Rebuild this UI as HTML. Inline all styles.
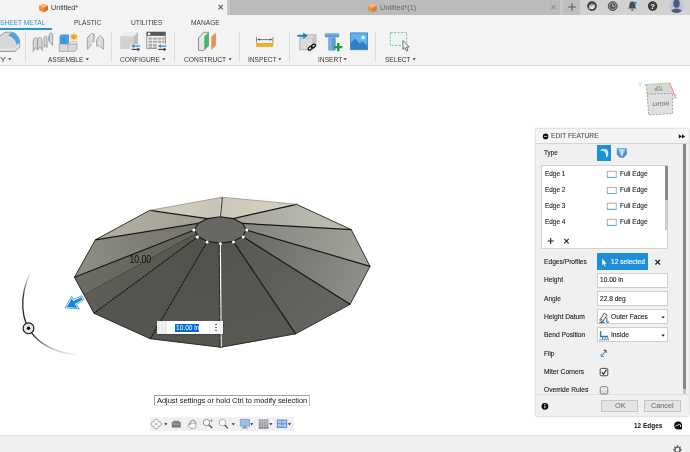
<!DOCTYPE html>
<html>
<head>
<meta charset="utf-8">
<title>Untitled*</title>
<style>
html,body{margin:0;padding:0;}
body{width:690px;height:452px;overflow:hidden;background:#fff;font-family:"Liberation Sans",sans-serif;font-size:7.3px;color:#333;}
#root{position:relative;width:690px;height:452px;overflow:hidden;will-change:transform;}
.abs{position:absolute;}
.t{position:absolute;white-space:nowrap;line-height:10px;height:10px;transform-origin:0 50%;}
/* top tab bar */
#tabbar{left:0;top:0;width:690px;height:15px;background:#d1d1d1;border-bottom:1px solid #e0e0e0;}
#tab1{left:0;top:0;width:227px;height:16px;background:#f3f3f3;}
#tab2{left:227px;top:0;width:333px;height:15px;background:#bbb;border-left:3px solid #c8c8c8;box-sizing:border-box;}
#plus{left:560px;top:0;width:20.2px;height:15px;background:#bebebe;border-left:3px solid #c9c9c9;box-sizing:border-box;}
/* ribbon */
#ribbon{left:0;top:15px;width:690px;height:50px;background:#f3f3f3;border-bottom:1px solid #d9d9d9;}
.rt{top:17.7px;font-size:7.4px;color:#3a3a3a;}
.lbl{top:54.8px;font-size:7.4px;color:#383838;}
.div{position:absolute;top:32px;width:1px;height:30px;background:#dcdcdc;}
/* panel */
#panel{left:536px;top:128.5px;width:153px;height:287px;background:#f0f0f0;box-shadow:0 0 2px rgba(0,0,0,.35);}
#phead{left:0;top:0;width:153px;height:14px;background:#f5f5f5;border-bottom:1px solid #d4d4d4;}
#panel .t{margin-top:0.6px;-webkit-text-stroke:0.12px;}
.pl{left:7.8px;font-size:7.3px;color:#222;}
.inp{position:absolute;left:60.8px;width:71.2px;height:15.4px;background:#fff;border:1px solid #cfcfcf;box-sizing:border-box;}
.btn{position:absolute;top:271.6px;height:11.8px;box-sizing:border-box;border:1px solid #c4c4c4;background:#e4e4e4;color:#555;font-size:8px;text-align:center;line-height:10px;}
/* bottom */
#status{left:0;top:435px;width:690px;height:17px;background:#f0f0f0;border-top:1px solid #e2e2e2;box-sizing:border-box;}
</style>
</head>
<body>
<div id="root">

<!-- ======= canvas graphics (3D model etc.) ======= -->
<svg class="abs" id="scene" style="left:0;top:66px" width="690" height="369" viewBox="0 66 690 369">
<!--MODEL-->
<defs><linearGradient id="g0" gradientUnits="userSpaceOnUse" x1="259.4" y1="200.8" x2="226.8" y2="217.7"><stop offset="0" stop-color="#d2cec0"/><stop offset="1" stop-color="#cbc7b9"/></linearGradient><linearGradient id="g1" gradientUnits="userSpaceOnUse" x1="323.9" y1="217.0" x2="237.9" y2="221.0"><stop offset="0" stop-color="#bbbaaf"/><stop offset="1" stop-color="#a7a79e"/></linearGradient><linearGradient id="g2" gradientUnits="userSpaceOnUse" x1="360.6" y1="248.0" x2="244.4" y2="226.7"><stop offset="0" stop-color="#a1a19a"/><stop offset="1" stop-color="#84847f"/></linearGradient><linearGradient id="g3" gradientUnits="userSpaceOnUse" x1="360.1" y1="285.3" x2="244.4" y2="233.3"><stop offset="0" stop-color="#8e8e88"/><stop offset="1" stop-color="#696863"/></linearGradient><linearGradient id="g4" gradientUnits="userSpaceOnUse" x1="322.9" y1="319.1" x2="237.9" y2="239.0"><stop offset="0" stop-color="#65645f"/><stop offset="1" stop-color="#595853"/></linearGradient><linearGradient id="g5" gradientUnits="userSpaceOnUse" x1="258.2" y1="340.5" x2="226.8" y2="242.3"><stop offset="0" stop-color="#595853"/><stop offset="1" stop-color="#55544f"/></linearGradient><linearGradient id="g6" gradientUnits="userSpaceOnUse" x1="185.6" y1="342.9" x2="213.9" y2="242.3"><stop offset="0" stop-color="#56554f"/><stop offset="1" stop-color="#52514b"/></linearGradient><linearGradient id="g7" gradientUnits="userSpaceOnUse" x1="122.2" y1="325.9" x2="202.7" y2="239.0"><stop offset="0" stop-color="#56554f"/><stop offset="1" stop-color="#53524c"/></linearGradient><linearGradient id="g8" gradientUnits="userSpaceOnUse" x1="84.2" y1="295.2" x2="196.2" y2="233.3"><stop offset="0" stop-color="#5e5d57"/><stop offset="1" stop-color="#585750"/></linearGradient><linearGradient id="g8b" gradientUnits="userSpaceOnUse" x1="84.2" y1="295.2" x2="196.2" y2="233.3"><stop offset="0" stop-color="#6c6b64"/><stop offset="1" stop-color="#64635c"/></linearGradient><linearGradient id="g9" gradientUnits="userSpaceOnUse" x1="85.0" y1="258.5" x2="196.2" y2="226.7"><stop offset="0" stop-color="#8c8c83"/><stop offset="1" stop-color="#74736b"/></linearGradient><linearGradient id="g10" gradientUnits="userSpaceOnUse" x1="122.5" y1="225.1" x2="202.7" y2="221.0"><stop offset="0" stop-color="#afad9f"/><stop offset="1" stop-color="#a2a093"/></linearGradient><linearGradient id="g11" gradientUnits="userSpaceOnUse" x1="185.9" y1="203.9" x2="213.9" y2="217.7"><stop offset="0" stop-color="#d0ccbd"/><stop offset="1" stop-color="#c8c4b5"/></linearGradient></defs>
<polygon points="222.2,197.3 296.5,204.3 233.2,218.6 220.3,216.8" fill="url(#g0)" stroke="url(#g0)" stroke-width="0.6"/>
<polygon points="296.5,204.3 351.3,229.7 242.6,223.4 233.2,218.6" fill="url(#g1)" stroke="url(#g1)" stroke-width="0.6"/>
<polygon points="351.3,229.7 370.0,266.3 246.1,230.0 242.6,223.4" fill="url(#g2)" stroke="url(#g2)" stroke-width="0.6"/>
<polygon points="370.0,266.3 350.1,304.3 242.6,236.6 246.1,230.0" fill="url(#g3)" stroke="url(#g3)" stroke-width="0.6"/>
<polygon points="350.1,304.3 295.6,333.8 233.2,241.4 242.6,236.6" fill="url(#g4)" stroke="url(#g4)" stroke-width="0.6"/>
<polygon points="295.6,333.8 220.8,347.2 220.3,243.2 233.2,241.4" fill="url(#g5)" stroke="url(#g5)" stroke-width="0.6"/>
<polygon points="220.8,347.2 150.3,338.7 207.4,241.4 220.3,243.2" fill="url(#g6)" stroke="url(#g6)" stroke-width="0.6"/>
<polygon points="150.3,338.7 94.0,313.2 198.0,236.6 207.4,241.4" fill="url(#g7)" stroke="url(#g7)" stroke-width="0.6"/>
<polygon points="94.0,313.2 74.5,277.2 194.5,230.0 198.0,236.6" fill="url(#g8)" stroke="url(#g8)" stroke-width="0.6"/>
<polygon points="84.2,295.2 74.5,277.2 194.5,230.0 196.2,233.3" fill="url(#g8b)"/>
<polygon points="74.5,277.2 95.4,239.8 198.0,223.4 194.5,230.0" fill="url(#g9)" stroke="url(#g9)" stroke-width="0.6"/>
<polygon points="95.4,239.8 149.7,210.4 207.4,218.6 198.0,223.4" fill="url(#g10)" stroke="url(#g10)" stroke-width="0.6"/>
<polygon points="149.7,210.4 222.2,197.3 220.3,216.8 207.4,218.6" fill="url(#g11)" stroke="url(#g11)" stroke-width="0.6"/>
<polygon points="220.3,216.8 233.2,218.6 242.6,223.4 246.1,230.0 242.6,236.6 233.2,241.4 220.3,243.2 207.4,241.4 198.0,236.6 194.5,230.0 198.0,223.4 207.4,218.6" fill="#686762" stroke="#181816" stroke-width="1.1"/>
<line x1="220.3" y1="216.8" x2="222.2" y2="197.3" stroke="#181816" stroke-width="1.2"/>
<line x1="233.2" y1="218.6" x2="296.5" y2="204.3" stroke="#181816" stroke-width="1.2"/>
<line x1="242.6" y1="223.4" x2="351.3" y2="229.7" stroke="#181816" stroke-width="1.2"/>
<line x1="246.1" y1="230.0" x2="370.0" y2="266.3" stroke="#181816" stroke-width="1.2"/>
<line x1="242.6" y1="236.6" x2="350.1" y2="304.3" stroke="#181816" stroke-width="1.2"/>
<line x1="233.2" y1="241.4" x2="295.6" y2="333.8" stroke="#181816" stroke-width="1.2"/>
<line x1="220.3" y1="243.2" x2="220.8" y2="347.2" stroke="#181816" stroke-width="1.2"/>
<line x1="207.4" y1="241.4" x2="150.3" y2="338.7" stroke="#181816" stroke-width="1.2" stroke-dasharray="2.2 0.7"/>
<line x1="198.0" y1="236.6" x2="94.0" y2="313.2" stroke="#181816" stroke-width="1.2" stroke-dasharray="2.2 0.7"/>
<line x1="194.5" y1="230.0" x2="74.5" y2="277.2" stroke="#181816" stroke-width="1.2"/>
<line x1="198.0" y1="223.4" x2="95.4" y2="239.8" stroke="#181816" stroke-width="1.2"/>
<line x1="207.4" y1="218.6" x2="149.7" y2="210.4" stroke="#181816" stroke-width="1.2"/>
<line x1="222.2" y1="197.3" x2="296.5" y2="204.3" stroke="#8f8e84" stroke-width="0.7" stroke-linecap="round"/>
<line x1="296.5" y1="204.3" x2="351.3" y2="229.7" stroke="#222220" stroke-width="0.85" stroke-linecap="round"/>
<line x1="351.3" y1="229.7" x2="370.0" y2="266.3" stroke="#222220" stroke-width="0.85" stroke-linecap="round"/>
<line x1="370.0" y1="266.3" x2="350.1" y2="304.3" stroke="#222220" stroke-width="0.85" stroke-linecap="round"/>
<line x1="350.1" y1="304.3" x2="295.6" y2="333.8" stroke="#222220" stroke-width="0.85" stroke-linecap="round"/>
<line x1="295.6" y1="333.8" x2="220.8" y2="347.2" stroke="#222220" stroke-width="0.85" stroke-linecap="round"/>
<line x1="220.8" y1="347.2" x2="150.3" y2="338.7" stroke="#222220" stroke-width="0.85" stroke-linecap="round"/>
<line x1="150.3" y1="338.7" x2="94.0" y2="313.2" stroke="#222220" stroke-width="0.85" stroke-linecap="round"/>
<line x1="94.0" y1="313.2" x2="74.5" y2="277.2" stroke="#222220" stroke-width="0.85" stroke-linecap="round"/>
<line x1="74.5" y1="277.2" x2="95.4" y2="239.8" stroke="#222220" stroke-width="0.85" stroke-linecap="round"/>
<line x1="95.4" y1="239.8" x2="149.7" y2="210.4" stroke="#222220" stroke-width="0.85" stroke-linecap="round"/>
<line x1="149.7" y1="210.4" x2="222.2" y2="197.3" stroke="#8f8e84" stroke-width="0.7" stroke-linecap="round"/>
<circle cx="246.7" cy="230.0" r="1.5" fill="#fff"/>
<circle cx="243.2" cy="236.9" r="1.5" fill="#fff"/>
<circle cx="233.5" cy="242.0" r="1.5" fill="#fff"/>
<circle cx="220.3" cy="243.8" r="1.5" fill="#fff"/>
<circle cx="207.1" cy="242.0" r="1.5" fill="#fff"/>
<circle cx="197.4" cy="236.9" r="1.5" fill="#fff"/>
<circle cx="193.9" cy="230.0" r="1.5" fill="#fff"/>
<!--/MODEL-->

<!-- thin construction line on face 8 -->
<line x1="84.3" y1="294.6" x2="196.2" y2="233.6" stroke="#2a2a28" stroke-width="0.5"/>
<!-- selected (white) edge -->
<line x1="221.4" y1="198.6" x2="219.7" y2="216.6" stroke="#fff" stroke-width="0.7" opacity="0.85"/>
<line x1="220.3" y1="244" x2="221.2" y2="346.8" stroke="#fff" stroke-width="1.2"/>
<line x1="219.2" y1="244" x2="219.9" y2="346.8" stroke="#222" stroke-width="0.8" stroke-dasharray="9 1.5"/>
<!-- dimension label -->
<text x="129.4" y="262.7" font-family="Liberation Sans, sans-serif" font-size="10" fill="#0c0c0c" textLength="21.8" lengthAdjust="spacingAndGlyphs">10.00</text>
<!-- arc manipulator -->
<defs><linearGradient id="arcg" gradientUnits="userSpaceOnUse" x1="0" y1="272" x2="0" y2="356">
<stop offset="0" stop-color="#222" stop-opacity="0"/><stop offset="0.3" stop-color="#222" stop-opacity="1"/><stop offset="0.75" stop-color="#222" stop-opacity="1"/><stop offset="1" stop-color="#222" stop-opacity="0"/></linearGradient></defs>
<path d="M30.5 272 C19 296 20 322 35 337 C46 348 60 353 75 354.5" fill="none" stroke="url(#arcg)" stroke-width="1.25"/>
<circle cx="28.5" cy="328.3" r="5.4" fill="#e4e4e4" stroke="#111" stroke-width="1.1"/>
<circle cx="28.5" cy="328.3" r="1.7" fill="#111"/>
<!-- blue arrow -->
<polygon points="65.1,307.8 71.6,296.2 73.6,299.3 81.7,295.8 84.0,299.7 76.3,304.3 79.4,309.0" fill="#fff" stroke="#2594dc" stroke-width="0.8" stroke-linejoin="round"/>
<polygon points="66.9,306.9 71.7,298.3 73.3,300.9 81.3,297.3 82.6,299.4 74.8,304 77.6,308.1" fill="#1888d6"/>

<!-- view cube -->
<g opacity="0.92">
<polygon points="646.4,84.8 669.6,82.9 672.7,93.4 647.1,94.2" fill="#d6d6d6"/>
<polygon points="647.1,94.2 672.7,93.4 672.7,113.5 648.7,115" fill="#dedede"/>
<path d="M646.4 84.8 L647.1 94.2 L648.7 115 L672.7 113.5 L672.7 93.4 M647.1 94.2 L672.7 93.4" fill="none" stroke="#7c7c7c" stroke-width="0.7" stroke-dasharray="2.2 1.2"/>
<line x1="644" y1="84.8" x2="669.6" y2="82.9" stroke="#7fd27f" stroke-width="0.8"/>
<line x1="669.6" y1="82.9" x2="674.4" y2="95" stroke="#e46a6a" stroke-width="0.9"/>
<text x="638" y="87.4" font-family="Liberation Sans, sans-serif" font-size="6.5" fill="#9bdc9b">Y</text>
<text x="673" y="99" font-family="Liberation Sans, sans-serif" font-size="6.5" fill="#e46a6a">X</text>
<text transform="translate(669,101.6) rotate(177)" font-family="Liberation Sans, sans-serif" font-size="5.4" font-weight="bold" fill="#7c7c7c" textLength="17" lengthAdjust="spacingAndGlyphs">RIGHT</text>
<text transform="translate(662.6,86) rotate(176) scale(.62,.95)" font-family="Liberation Sans, sans-serif" font-size="6.6" font-weight="bold" fill="#7c7c7c">TOP</text>
</g>

<!-- navigation toolbar -->
<rect x="150" y="417.2" width="144.2" height="13.8" fill="#eff0f1"/>
<rect x="153.9" y="419.2" width="4.6" height="9.6" rx="2.3" fill="#f6f6f6" stroke="#8c8c8c" stroke-width="0.7"/>
<rect x="151" y="421.7" width="10.4" height="4.6" rx="2.3" fill="#f6f6f6" stroke="#8c8c8c" stroke-width="0.7"/>
<rect x="154.3" y="420" width="3.8" height="8" rx="1.9" fill="#f6f6f6"/>
<path d="M155 424 H157.4 M156.2 422.8 V425.2" stroke="#8c8c8c" stroke-width="0.6"/>
<rect x="171.8" y="422" width="8.9" height="5.4" rx="0.5" fill="#707070"/>
<rect x="173.2" y="420.6" width="6.1" height="1.6" fill="#8c8c8c"/>
<path d="M172.6 424 H179.9" stroke="#d4d4d4" stroke-width="0.7"/>
<path d="M172.6 425.7 H179.9" stroke="#9a9a9a" stroke-width="0.5"/>
<!-- hand -->
<path d="M190 428.4 C188.6 427 188 425.4 188.2 424.6 C188.6 423.8 189.6 424 190.2 425 V421.6 C190.2 420.6 191.6 420.6 191.6 421.6 V420.6 C191.6 419.6 193 419.6 193 420.6 V420.9 C193 419.9 194.4 419.9 194.4 420.9 V421.8 C194.4 421 195.8 421 195.8 422 V425.4 C195.8 427 195.2 428 194.6 428.4 Z" fill="#f8f8f8" stroke="#6e6e6e" stroke-width="0.6" stroke-linejoin="round"/>
<path d="M188.6 423.2 H196.4" stroke="#6e6e6e" stroke-width="0.5"/>
<!-- zoom+ -->
<circle cx="206.5" cy="422.5" r="3.2" fill="#fafafa" stroke="#777" stroke-width="0.8"/>
<path d="M208.8 424.9 L212.2 428" stroke="#444" stroke-width="1.2"/>
<path d="M210.4 420.6 h2.2 m-1.1 -1.1 v2.2" stroke="#555" stroke-width="0.6"/>
<!-- zoom -->
<circle cx="222.4" cy="422.6" r="3.3" fill="#fafafa" stroke="#999" stroke-width="0.8"/>
<path d="M224.8 425.2 L227.8 428.4" stroke="#444" stroke-width="1.2"/>
<!-- display -->
<rect x="240.2" y="419.3" width="9.2" height="6.8" fill="#9dbfe8" stroke="#6a94cc" stroke-width="0.7"/>
<rect x="243.4" y="426.4" width="2.8" height="1.3" fill="#777"/><rect x="241.8" y="427.6" width="6" height="0.9" fill="#8a8a8a"/>
<!-- grid -->
<linearGradient id="grg" x1="0" y1="0" x2="0" y2="1"><stop offset="0" stop-color="#a6a6b4"/><stop offset="1" stop-color="#7e7e8c"/></linearGradient>
<rect x="258.8" y="419.2" width="9.6" height="9.6" fill="url(#grg)"/>
<path d="M261.2 419.2 V428.8 M263.6 419.2 V428.8 M266 419.2 V428.8 M258.8 421.6 H268.4 M258.8 424 H268.4 M258.8 426.4 H268.4" stroke="#d6d6de" stroke-width="0.5"/>
<!-- layout -->
<rect x="277.3" y="420" width="9.4" height="7.4" fill="#a9c9f0" stroke="#4f84c6" stroke-width="0.9"/>
<path d="M282 420 V427.4 M277.3 423.7 H286.7" stroke="#4f84c6" stroke-width="0.7"/>
<g fill="#222">
<polygon points="164.2,423.2 167.4,423.2 165.8,425.2"/><polygon points="231.7,423.2 234.9,423.2 233.3,425.2"/><polygon points="250.1,423.2 253.3,423.2 251.7,425.2"/><polygon points="269.2,423.2 272.4,423.2 270.8,425.2"/><polygon points="287.9,423.2 291.1,423.2 289.5,425.2"/></g>
<!-- selection filter icon -->
<circle cx="678.1" cy="425.4" r="3.9" fill="#0c0c0c"/>
<rect x="678.1" y="425.4" width="3.9" height="3.9" fill="#0c0c0c"/>
<path d="M675.6 426.6 C676.2 424.6 677.4 425.8 678.2 425 C679 424.2 680 424.2 680.6 425 V427" fill="none" stroke="#fff" stroke-width="0.9"/>
<!--SCENEX4-->
</svg>

<!-- ======= top tab bar ======= -->
<div class="abs" id="tabbar"></div>
<div class="abs" id="tab1"></div>
<div class="abs" id="tab2"></div>
<div class="abs" id="plus"></div>
<div class="t" style="left:51.3px;top:2.8px;font-size:7.4px;color:#333;transform:scaleX(0.9664)">Untitled*</div>
<div class="t" style="left:380px;top:2.9px;font-size:7.4px;color:#666;transform:scaleX(0.9792)">Untitled*(1)</div>

<!-- ======= ribbon ======= -->
<div class="abs" id="ribbon"></div>
<div class="t rt" style="left:-0.4px;color:#2f9bcf;transform:scaleX(0.8943)">SHEET METAL</div>
<div class="abs" style="left:0;top:28.2px;width:52.2px;height:1.8px;background:#2b93c9;"></div>
<div class="t rt" style="left:74.4px;transform:scaleX(0.8860)">PLASTIC</div>
<div class="t rt" style="left:130.9px;transform:scaleX(0.9072)">UTILITIES</div>
<div class="t rt" style="left:190.9px;transform:scaleX(0.8960)">MANAGE</div>

<div class="div" style="left:25.4px"></div>
<div class="div" style="left:111.3px"></div>
<div class="div" style="left:174.4px"></div>
<div class="div" style="left:238.6px"></div>
<div class="div" style="left:289.4px"></div>
<div class="div" style="left:375.3px"></div>

<div class="t lbl" style="left:-4.6px;transform:scaleX(1.1425)">FY</div>
<div class="t lbl" style="left:47.8px;transform:scaleX(0.8860)">ASSEMBLE</div>
<div class="t lbl" style="left:120.4px;transform:scaleX(0.9017)">CONFIGURE</div>
<div class="t lbl" style="left:183.9px;transform:scaleX(0.9094)">CONSTRUCT</div>
<div class="t lbl" style="left:247.6px;transform:scaleX(0.8929)">INSPECT</div>
<div class="t lbl" style="left:317.7px;transform:scaleX(0.8973)">INSERT</div>
<div class="t lbl" style="left:384.9px;transform:scaleX(0.8865)">SELECT</div>

<!-- ribbon + tab icons -->
<svg class="abs" id="topicons" style="left:0;top:0" width="690" height="66" viewBox="0 0 690 66">
<g transform="translate(39,3.4)">
<polygon points="4.5,0 9,2.2 4.5,4.4 0,2.2" fill="#fbb773"/>
<polygon points="0,2.2 4.5,4.4 4.5,9 0,6.7" fill="#f28a2e"/>
<polygon points="9,2.2 4.5,4.4 4.5,9 9,6.7" fill="#dd6a18"/>
</g><g transform="translate(367.8,3.6)" opacity="0.85">
<polygon points="4.5,0 9,2.2 4.5,4.4 0,2.2" fill="#fbb773"/>
<polygon points="0,2.2 4.5,4.4 4.5,9 0,6.7" fill="#f28a2e"/>
<polygon points="9,2.2 4.5,4.4 4.5,9 9,6.7" fill="#dd6a18"/>
</g>
<!-- label arrows -->
<polygon points="8.3,58.3 11.3,58.3 9.8,60.3" fill="#333"/><polygon points="85.9,58.3 88.9,58.3 87.4,60.3" fill="#333"/><polygon points="162.3,58.3 165.3,58.3 163.8,60.3" fill="#333"/><polygon points="228.6,58.3 231.6,58.3 230.1,60.3" fill="#333"/><polygon points="278.3,58.3 281.3,58.3 279.8,60.3" fill="#333"/><polygon points="343.7,58.3 346.7,58.3 345.2,60.3" fill="#333"/><polygon points="412.7,58.3 415.7,58.3 414.2,60.3" fill="#333"/>
<!-- tab close / plus -->
<path d="M218.5 4.9 L222.9 9.3 M222.9 4.9 L218.5 9.3" stroke="#5a5a5a" stroke-width="1.05" fill="none"/>
<path d="M551.4 4.9 L555.6 9.1 M555.6 4.9 L551.4 9.1" stroke="#7a7a7a" stroke-width="0.9" fill="none"/>
<path d="M568.2 7 H575.8 M572 3.2 V10.8" stroke="#757575" stroke-width="1.5" fill="none"/>
<!-- extension icon -->
<circle cx="592" cy="6.1" r="4.8" fill="#3b3b3b"/>
<path d="M589.2 6.4 a2.9 2.9 0 1 1 1.2 2.3 l-1.3 0.6 z" fill="#d8d8d8"/>
<path d="M590 4 l1.6 1.5 l1.8 -1.8" stroke="#3b3b3b" stroke-width="0.9" fill="none"/>
<!-- clock -->
<circle cx="612.7" cy="6.1" r="4.4" fill="#9a9a9a" stroke="#3f3f3f" stroke-width="1"/>
<circle cx="612.7" cy="6.1" r="2.9" fill="#555"/>
<path d="M612.7 4 V6.3 H614.6" stroke="#ddd" stroke-width="0.8" fill="none"/>
<!-- bell -->
<path d="M632.3 1.6 c-2 0 -2.9 1.5 -2.9 3.4 c0 1.8 -0.5 2.7 -1.4 3.6 h8.6 c-0.9 -0.9 -1.4 -1.8 -1.4 -3.6 c0 -1.9 -0.9 -3.4 -2.9 -3.4 z" fill="#4a4a4a"/>
<rect x="631.2" y="9.2" width="2.2" height="1.5" rx="0.7" fill="#4a4a4a"/>
<circle cx="635.1" cy="3" r="1.5" fill="#1e90e0"/>
<!-- help -->
<circle cx="652.6" cy="6.1" r="4.8" fill="#3f3f3f"/>
<text x="652.6" y="8.9" text-anchor="middle" font-family="Liberation Sans, sans-serif" font-weight="bold" font-size="7.6" fill="#fff">?</text>
<!-- avatar -->
<clipPath id="avc"><circle cx="676.5" cy="5.8" r="7.3"/></clipPath>
<circle cx="676.5" cy="5.8" r="7.3" fill="#b9c5d6"/>
<g clip-path="url(#avc)"><ellipse cx="676.5" cy="3.6" rx="3.3" ry="4.2" fill="#4c5a78"/><ellipse cx="676.5" cy="13.6" rx="6.4" ry="5.2" fill="#4c5a78"/></g>

<!-- ribbon icon 1: fillet/modify -->
<path d="M-2 37.5 L5 32.2 H11 C15.5 33 18.8 36.5 19.8 41.5 V47 L15 51.4 H-2 Z" fill="#d8d8d8" stroke="#8b8b8b" stroke-width="0.8"/>
<path d="M8.2 35.8 C9.6 33.4 11.4 32.2 12.6 32.2 C16.4 33.2 19.2 37 19.8 42.2 L16.4 45 C16 40.6 13 37 8.2 35.8 Z" fill="#4fa3e3"/>
<path d="M-2 49.5 H14.5 L19.6 45" stroke="#f4f4f4" stroke-width="0.8" fill="none"/>
<!-- icon 2: assemble arches -->
<g fill="#d4d4d4" stroke="#8b8b8b" stroke-width="0.7" stroke-linejoin="round">
<path d="M33.2 41 C33.4 38 36 37 37.6 38.6 L37.6 50 L35 47.6 L33.2 51.6 Z"/>
<path d="M37.6 38.6 C38.8 36.8 41.6 37 42 39.6 L42.4 50.6 L40 47 L37.6 50 Z"/>
<path d="M44 38 C44.4 35.6 46.4 35.4 47 37.4 L47.2 47.6 L45.6 45 L44.2 47.4 Z"/>
<path d="M49.4 34.4 L50.6 32.4 L52.6 35 L52.6 45.4 L50.8 43.4 L49.4 41.8 Z"/>
</g>
<path d="M48.6 36 V41" stroke="#6aa7dd" stroke-width="0.8"/>
<!-- icon 3: new component -->
<path d="M59.2 44 H77 V49 L74.6 51.4 H59.2 Z" fill="#d9d9d9" stroke="#9a9a9a" stroke-width="0.7"/>
<path d="M68 44 V51.4" stroke="#9a9a9a" stroke-width="0.6"/>
<path d="M68.7 43.6 L70.6 41.6 H77 V44 Z" fill="#ececec" stroke="#a8a8a8" stroke-width="0.5"/>
<path d="M59.6 36 L61.4 34.4 H69 V42.4 L67.4 44 H59.6 Z" fill="#3f95de"/>
<path d="M59.6 36.2 H67.3 V44" stroke="#6db4ee" stroke-width="0.6" fill="none"/>
<polygon points="73.9,32.6 74.9,35 77,33.7 76.2,36 78.5,36.7 76.2,37.5 77,39.8 74.9,38.5 73.9,40.9 72.9,38.5 70.8,39.8 71.6,37.5 69.3,36.7 71.6,36 70.8,33.7 72.9,35" fill="#f5a21b"/>
<!-- icon 4: joint -->
<g fill="#d6d6d6" stroke="#8b8b8b" stroke-width="0.7" stroke-linejoin="round">
<path d="M87.2 37.8 L91.4 33.6 L94 34 L94 42 L91.6 41 L91.4 45 L87.4 49.4 Z"/>
<path d="M96.6 40 L100 35.4 L103.6 39 L103.6 49.4 L99.4 46 L96.6 46 Z"/>
</g>
<path d="M91.5 34 V44.5 M99.8 36 V46" stroke="#f5f5f5" stroke-width="0.7"/>
<!-- icon 5: configure cube -->
<path d="M120.3 36.2 L124.6 32 H138 V44.6 L133.6 48.9 H120.3 Z" fill="#dadada"/>
<path d="M120.3 36.2 H133.6 V48.9 H120.3 Z" fill="#d2d2d2"/>
<path d="M133.6 36.2 L138 32 V44.6 L133.6 48.9 Z" fill="#bdbdbd"/>
<path d="M120.3 36.2 L124.6 32 H138 L133.6 36.2 Z" fill="#ececec"/>
<rect x="130.6" y="44.4" width="10" height="6.6" fill="#f3f3f3"/>
<path d="M140.2 46.1 H133" stroke="#2f7fc8" stroke-width="1.2"/><polygon points="131.2,46.1 134.2,44.3 134.2,47.9" fill="#2f7fc8"/>
<path d="M131.6 49.4 H138.4" stroke="#444" stroke-width="1.2"/><polygon points="140.4,49.4 137.4,47.6 137.4,51.2" fill="#444"/>
<!-- icon 6: table -->
<rect x="146.8" y="32" width="18.6" height="16.4" fill="#ededed" stroke="#777" stroke-width="0.7"/>
<rect x="146.8" y="32" width="18.6" height="3.8" fill="#555"/>
<rect x="148" y="32.8" width="2.2" height="2.2" fill="#fff"/>
<g fill="#a9a9a9"><rect x="148.6" y="37.6" width="3.6" height="2"/><rect x="153.2" y="37.6" width="3.6" height="2"/><rect x="157.8" y="37.6" width="3.6" height="2"/><rect x="162.2" y="37.6" width="2.4" height="2"/>
<rect x="148.6" y="40.8" width="3.6" height="2"/><rect x="153.2" y="40.8" width="3.6" height="2"/><rect x="157.8" y="40.8" width="3.6" height="2"/><rect x="162.2" y="40.8" width="2.4" height="2"/>
<rect x="148.6" y="44" width="3.6" height="2"/><rect x="153.2" y="44" width="3.6" height="2"/>
<rect x="148.6" y="46.6" width="3.6" height="1.4"/><rect x="153.2" y="46.6" width="3.6" height="1.4"/></g>
<rect x="157" y="44.2" width="10" height="7" fill="#f3f3f3"/>
<path d="M166.4 46.1 H159.6" stroke="#2f7fc8" stroke-width="1.2"/><polygon points="157.8,46.1 160.8,44.3 160.8,47.9" fill="#2f7fc8"/>
<path d="M158.2 49.4 H164.6" stroke="#444" stroke-width="1.2"/><polygon points="166.6,49.4 163.6,47.6 163.6,51.2" fill="#444"/>
<!-- icon 7: construct -->
<polygon points="198.5,38 203.7,32.3 208.5,32.3 208.5,45.8 203.3,50.6 198.5,50.2" fill="#e6e6e6" stroke="#777" stroke-width="0.8" stroke-linejoin="round"/>
<polygon points="204.3,36.3 208.5,32.6 208.5,45.8 204.3,49.9" fill="#3dba6f"/>
<polygon points="211.3,36.7 215.9,32.8 215.9,45.4 211.3,49.9" fill="#ea8f4d"/>
<!-- icon 8: inspect -->
<path d="M256.5 37 V42.6 M272.9 37 V42.6" stroke="#666" stroke-width="0.8"/>
<path d="M258.6 39.6 H270.8" stroke="#444" stroke-width="0.7"/>
<polygon points="257.1,39.6 259.6,38.4 259.6,40.8" fill="#444"/><polygon points="272.3,39.6 269.8,38.4 269.8,40.8" fill="#444"/>
<rect x="256.2" y="43" width="17" height="3.8" fill="#f0a51e"/>
<path d="M258 44.9 H271.4" stroke="#f7c25e" stroke-width="0.9" stroke-dasharray="1.4 0.8"/>
<!-- icon 9: insert derive -->
<path d="M299.8 38.4 L303.4 34.8 H316 V46.4 L312.4 49.8 H299.8 Z" fill="#dcdcdc" stroke="#9d9d9d" stroke-width="0.7"/>
<path d="M299.8 38.4 H312.4 V49.8 M312.4 38.4 L316 34.8" stroke="#b4b4b4" stroke-width="0.6" fill="none"/>
<path d="M312.4 38.4 L316 34.8 V46.4 L312.4 49.8 Z" fill="#c4c4c4"/>
<path d="M297.4 35.8 H304" stroke="#1a7fd6" stroke-width="2"/><polygon points="307.8,35.8 303.2,32.6 303.2,39" fill="#1a7fd6"/>
<g fill="none" stroke="#111" stroke-width="1.2"><ellipse cx="310.2" cy="48.2" rx="2.4" ry="1.5" transform="rotate(-35 310.2 48.2)"/><ellipse cx="313.4" cy="46" rx="2.4" ry="1.5" transform="rotate(-35 313.4 46)"/></g>
<!-- icon 10: bolt -->
<rect x="324.8" y="33.2" width="14.4" height="4" rx="0.8" fill="#5b9bd5"/>
<rect x="324.8" y="33.2" width="14.4" height="1.4" rx="0.7" fill="#8ec0ea"/>
<rect x="328.3" y="37.2" width="7.4" height="13.4" rx="0.8" fill="#5b9bd5"/>
<rect x="329.4" y="37.2" width="2" height="13.4" fill="#82b6e4"/>
<path d="M338.3 43 V51.2 M334.2 47.1 H342.4" stroke="#1b9a3c" stroke-width="2.4"/>
<!-- icon 11: image -->
<rect x="350.6" y="32.9" width="17" height="16.8" fill="#62b2ec" stroke="#2f7fc6" stroke-width="0.8"/>
<path d="M351 42.4 L355 38.6 L359.6 43.6 L362.4 41.2 L367.2 45.8 V49.3 H351 Z" fill="#2f7fc6"/>
<circle cx="363.1" cy="37.6" r="1.8" fill="#fff"/>
<!-- icon 12: select -->
<rect x="390.3" y="32.6" width="16.4" height="12.8" fill="none" stroke="#5fc18d" stroke-width="0.9" stroke-dasharray="2.2 1.3"/>
<path d="M403 40.6 V49.4 L405 47.6 L406.6 51 L408 50.3 L406.5 47 H409.2 Z" fill="#fff" stroke="#333" stroke-width="0.7" stroke-linejoin="round"/>
</svg>

<!-- ======= edit feature panel ======= -->
<div class="abs" id="panel">
  <div class="abs" id="phead"></div>
  <div class="t" style="left:14.8px;top:2.4px;font-size:7.6px;color:#505050;transform:scaleX(0.8789)">EDIT FEATURE</div>
  <div class="t pl" style="top:18.8px;transform:scaleX(0.8655)">Type</div>
  <div class="abs" style="left:61px;top:16.6px;width:13.8px;height:15.8px;background:#1c8fd8;"></div>
  <!-- list -->
  <div class="abs" style="left:5px;top:36.5px;width:127.4px;height:84px;background:#fff;border:1px solid #d2d2d2;box-sizing:border-box;"></div>
  <div class="t pl" style="left:8.9px;top:40px;transform:scaleX(0.8816)">Edge 1</div>
  <div class="t pl" style="left:8.9px;top:56.1px;transform:scaleX(0.8816)">Edge 2</div>
  <div class="t pl" style="left:8.9px;top:71.9px;transform:scaleX(0.8816)">Edge 3</div>
  <div class="t pl" style="left:8.9px;top:88px;transform:scaleX(0.8816)">Edge 4</div>
  <div class="t pl" style="left:83.7px;top:40px;transform:scaleX(0.8920)">Full Edge</div>
  <div class="t pl" style="left:83.7px;top:56.1px;transform:scaleX(0.8920)">Full Edge</div>
  <div class="t pl" style="left:83.7px;top:71.9px;transform:scaleX(0.8920)">Full Edge</div>
  <div class="t pl" style="left:83.7px;top:88px;transform:scaleX(0.8920)">Full Edge</div>
  <div class="abs" style="left:129px;top:37.5px;width:2.7px;height:63.5px;background:#cdcdcd;"></div>
  <div class="abs" style="left:129px;top:37.5px;width:2.7px;height:33.8px;background:#8a8a8a;"></div>
  <!-- rows -->
  <div class="t pl" style="left:7.8px;top:127.9px;transform:scaleX(0.9116)">Edges/Profiles</div>
  <div class="abs" style="left:60.8px;top:124.8px;width:51.5px;height:16.6px;background:#1c8fd8;"></div>
  <div class="t" style="left:74.8px;top:127.9px;font-size:7.3px;color:#fff;transform:scaleX(0.9082)">12 selected</div>
  <div class="t pl" style="left:7.8px;top:146.4px;transform:scaleX(0.9007)">Height</div>
  <div class="inp" style="top:144px;"></div>
  <div class="t" style="left:63.6px;top:146.4px;font-size:7.3px;color:#222;transform:scaleX(0.9049)">10.00 in</div>
  <div class="t pl" style="left:7.8px;top:164.7px;transform:scaleX(0.8997)">Angle</div>
  <div class="inp" style="top:162.2px;"></div>
  <div class="t" style="left:63.6px;top:164.7px;font-size:7.3px;color:#222;transform:scaleX(0.9047)">22.8 deg</div>
  <div class="t pl" style="left:7.8px;top:183.1px;transform:scaleX(0.9165)">Height Datum</div>
  <div class="inp" style="top:180.4px;"></div>
  <div class="t" style="left:75.4px;top:183.1px;font-size:7.3px;color:#222;transform:scaleX(0.9189)">Outer Faces</div>
  <div class="t pl" style="left:7.8px;top:201.4px;transform:scaleX(0.9171)">Bend Position</div>
  <div class="inp" style="top:198.6px;"></div>
  <div class="t" style="left:75.4px;top:201.4px;font-size:7.3px;color:#222;transform:scaleX(0.9187)">Inside</div>
  <div class="t pl" style="left:7.8px;top:220px;transform:scaleX(0.8924)">Flip</div>
  <div class="t pl" style="left:7.8px;top:237.6px;transform:scaleX(0.9094)">Miter Corners</div>
  <div class="t pl" style="left:7.8px;top:256.1px;transform:scaleX(0.9081)">Override Rules</div>
  <div class="abs" style="left:0;top:265.8px;width:153px;height:1px;background:#dedede;"></div>
  <div class="btn" style="left:65.4px;width:36.8px;"></div>
  <div class="btn" style="left:108.3px;width:36.8px;"></div>
  <div class="t" style="left:78.6px;top:272.4px;font-size:8px;color:#777;transform:scaleX(0.9254)">OK</div>
  <div class="t" style="left:115.4px;top:272.4px;font-size:8px;color:#777;transform:scaleX(0.9074)">Cancel</div>
  <!-- main scrollbar -->
  <div class="abs" style="left:147.2px;top:15.4px;width:2.8px;height:250.4px;background:#c6c6c6;"></div>
  <div class="abs" style="left:147.2px;top:15.4px;width:2.8px;height:245px;background:#888;"></div>
  <svg class="abs" id="picons" style="left:0;top:0" width="153" height="287" viewBox="0 0 153 287">
  <!-- header icons -->
  <circle cx="9.6" cy="7.4" r="2.8" fill="#111"/><rect x="8" y="6.9" width="3.2" height="1" fill="#bbb"/>
  <polygon points="142.8,5.2 146,7.4 142.8,9.6" fill="#1a1a1a"/><polygon points="146,5.2 149.2,7.4 146,9.6" fill="#1a1a1a"/>
  <!-- type icon 1 (flange) -->
  <path d="M63.8 21.8 L66 19.8 L70.4 20 L72 22 L72.2 25.8 L70.4 28.8 L69.8 24.6 L67.6 22 Z" fill="#bfe3fb"/>
  <path d="M69.8 24.6 L72 22 L72.2 25.8 L70.4 28.8 Z" fill="#e2f2fd"/>
  <!-- type icon 2 -->
  <path d="M80.8 19.3 H90.8 V25.6 L87.6 28.8 H84 L80.8 25.6 Z" fill="#4d8fd0"/>
  <path d="M82 20.1 H89.6 L87 25.6 H84.6 Z" fill="#a8d0f2"/>
  <path d="M85.8 20.6 L85.8 25" stroke="#c8e2f8" stroke-width="1.6"/>
  <circle cx="85.8" cy="25.9" r="1" fill="#eef6fd"/>
  <!-- list row icons -->
  <g fill="#fff" stroke="#8a8a8a" stroke-width="0.7">
  <rect x="71.2" y="42.2" width="9" height="6.2"/><rect x="71.2" y="58.3" width="9" height="6.2"/><rect x="71.2" y="74.1" width="9" height="6.2"/><rect x="71.2" y="90.2" width="9" height="6.2"/></g>
  <g stroke="#59a6e0" stroke-width="0.9"><path d="M71 48.4 H80.4 M71 64.5 H80.4 M71 80.3 H80.4 M71 96.4 H80.4"/></g>
  <!-- plus / x -->
  <path d="M11.6 112 H17.8 M14.7 108.9 V115.1" stroke="#222" stroke-width="1.1"/>
  <path d="M28.3 109.9 L32.7 114.3 M32.7 109.9 L28.3 114.3" stroke="#222" stroke-width="1.1"/>
  <!-- selection cursor -->
  <path d="M66 129.3 V136.6 L67.7 135.2 L68.9 137.8 L70 137.3 L68.8 134.8 H70.9 Z" fill="#fff" stroke="#1567a8" stroke-width="0.3"/>
  <path d="M119.4 130.9 L124 135.5 M124 130.9 L119.4 135.5" stroke="#222" stroke-width="1.3"/>
  <!-- dropdown icons -->
  <path d="M63.7 191.2 L68.4 184 L71.2 186.1 L66.4 193 Z" fill="#f4f4f4" stroke="#333" stroke-width="0.8" stroke-linejoin="round"/>
  <path d="M64.6 189.9 L67.4 191.8" stroke="#333" stroke-width="0.6"/>
  <path d="M63.2 193.6 H68.6" stroke="#333" stroke-width="0.8"/>
  <path d="M70.8 188.4 V193.2 H73.2" fill="none" stroke="#2a86c8" stroke-width="1.2"/>
  <path d="M64.6 202 V207.6 H72.2" fill="none" stroke="#2a7fc0" stroke-width="1.5"/>
  <path d="M66.6 208 V210.4 M69.2 208 V210.4 M71.8 208 V210.4" stroke="#2a7fc0" stroke-width="0.9"/>
  <path d="M63.4 210.8 H72.8" stroke="#444" stroke-width="0.9" stroke-dasharray="1.3 0.8"/>
  <polygon points="125.4,187.4 128.8,187.4 127.1,189.6" fill="#222"/>
  <polygon points="125.4,205.6 128.8,205.6 127.1,207.8" fill="#222"/>
  <!-- flip -->
  <path d="M65.6 227 L69.8 221.6" stroke="#2a6fa8" stroke-width="0.9"/>
  <path d="M67.5 221.3 H70.1 V223.9" fill="none" stroke="#333" stroke-width="0.9"/>
  <path d="M65.2 224.8 V227.4 H67.8" fill="none" stroke="#2a86c8" stroke-width="0.9"/>
  <!-- checkboxes -->
  <rect x="64.2" y="239.4" width="7.6" height="7.4" rx="1.4" fill="#f4f4f4" stroke="#333" stroke-width="0.9"/>
  <path d="M65.8 243 L67.5 245.2 L70.4 240.6" fill="none" stroke="#222" stroke-width="1.1"/>
  <linearGradient id="cbg" x1="0" y1="0" x2="0" y2="1"><stop offset="0" stop-color="#f2f2f2"/><stop offset="1" stop-color="#d4d4d4"/></linearGradient>
  <rect x="64.2" y="257.7" width="7.6" height="7.4" rx="1.4" fill="url(#cbg)" stroke="#777" stroke-width="0.9"/>
  <!-- info -->
  <circle cx="8.9" cy="277.3" r="3.4" fill="#111"/><rect x="8.4" y="276.6" width="1" height="2.6" fill="#fff"/><rect x="8.4" y="275.1" width="1" height="1" fill="#fff"/>
  </svg>
</div>

<!-- ======= canvas overlays ======= -->
<!-- floating dimension input -->
<div class="abs" style="left:156.8px;top:321px;width:66.2px;height:12.9px;background:#fff;box-shadow:0 0.5px 1.5px rgba(0,0,0,.45);"></div>
<div class="abs" style="left:156.8px;top:321px;width:9.8px;height:12.9px;background:#ebebeb;"></div>
<div class="abs" style="left:209.4px;top:321px;width:13.6px;height:12.9px;background:#f6f6f6;"></div>
<div class="abs" style="left:159.8px;top:322.4px;width:1.4px;height:10px;background:#f7f7f7;"></div>
<div class="abs" style="left:162.6px;top:322.4px;width:1.4px;height:10px;background:#f7f7f7;"></div>
<div class="abs" style="left:175px;top:324px;width:24.4px;height:7.8px;background:#0a6ed1;"></div>
<div class="t" style="left:175.6px;top:322.9px;font-size:7.5px;color:#fff;transform:scaleX(0.8763)">10.00 in</div>
<div class="abs" style="left:208.6px;top:322px;width:1px;height:10.4px;background:#ebebeb;"></div>
<div class="abs" style="left:215.4px;top:324px;width:1.4px;height:1.4px;background:#666;box-shadow:0 2.9px 0 #666,0 5.8px 0 #666;"></div>

<div class="t" style="left:633.5px;top:421.2px;font-size:7.3px;font-weight:bold;color:#111;transform:scaleX(0.8831)">12 Edges</div>
<div class="abs" style="left:154.2px;top:395px;width:156.2px;height:11px;background:#fff;border:1px solid #a0a0a0;border-right-color:#c2c2c2;border-bottom-color:#e2e2e2;box-sizing:border-box;"></div>
<div class="t" style="left:156.9px;top:396.1px;font-size:8.1px;color:#111;transform:scaleX(0.9173)">Adjust settings or hold Ctrl to modify selection</div>

<!-- ======= bottom status ======= -->
<div class="abs" id="status"></div>
<svg class="abs" style="left:670px;top:440px" width="16" height="12" viewBox="670 440 16 12"><g transform="translate(677.5,449.7)"><circle r="2.6" fill="none" stroke="#626262" stroke-width="1.4"/><g stroke="#626262" stroke-width="1.3"><path d="M0 -4.4 V-2.8 M0 4.4 V2.8 M-4.4 0 H-2.8 M4.4 0 H2.8 M-3.1 -3.1 L-2 -2 M3.1 3.1 L2 2 M-3.1 3.1 L-2 2 M3.1 -3.1 L2 -2"/></g></g></svg>


</div>
</body>
</html>
